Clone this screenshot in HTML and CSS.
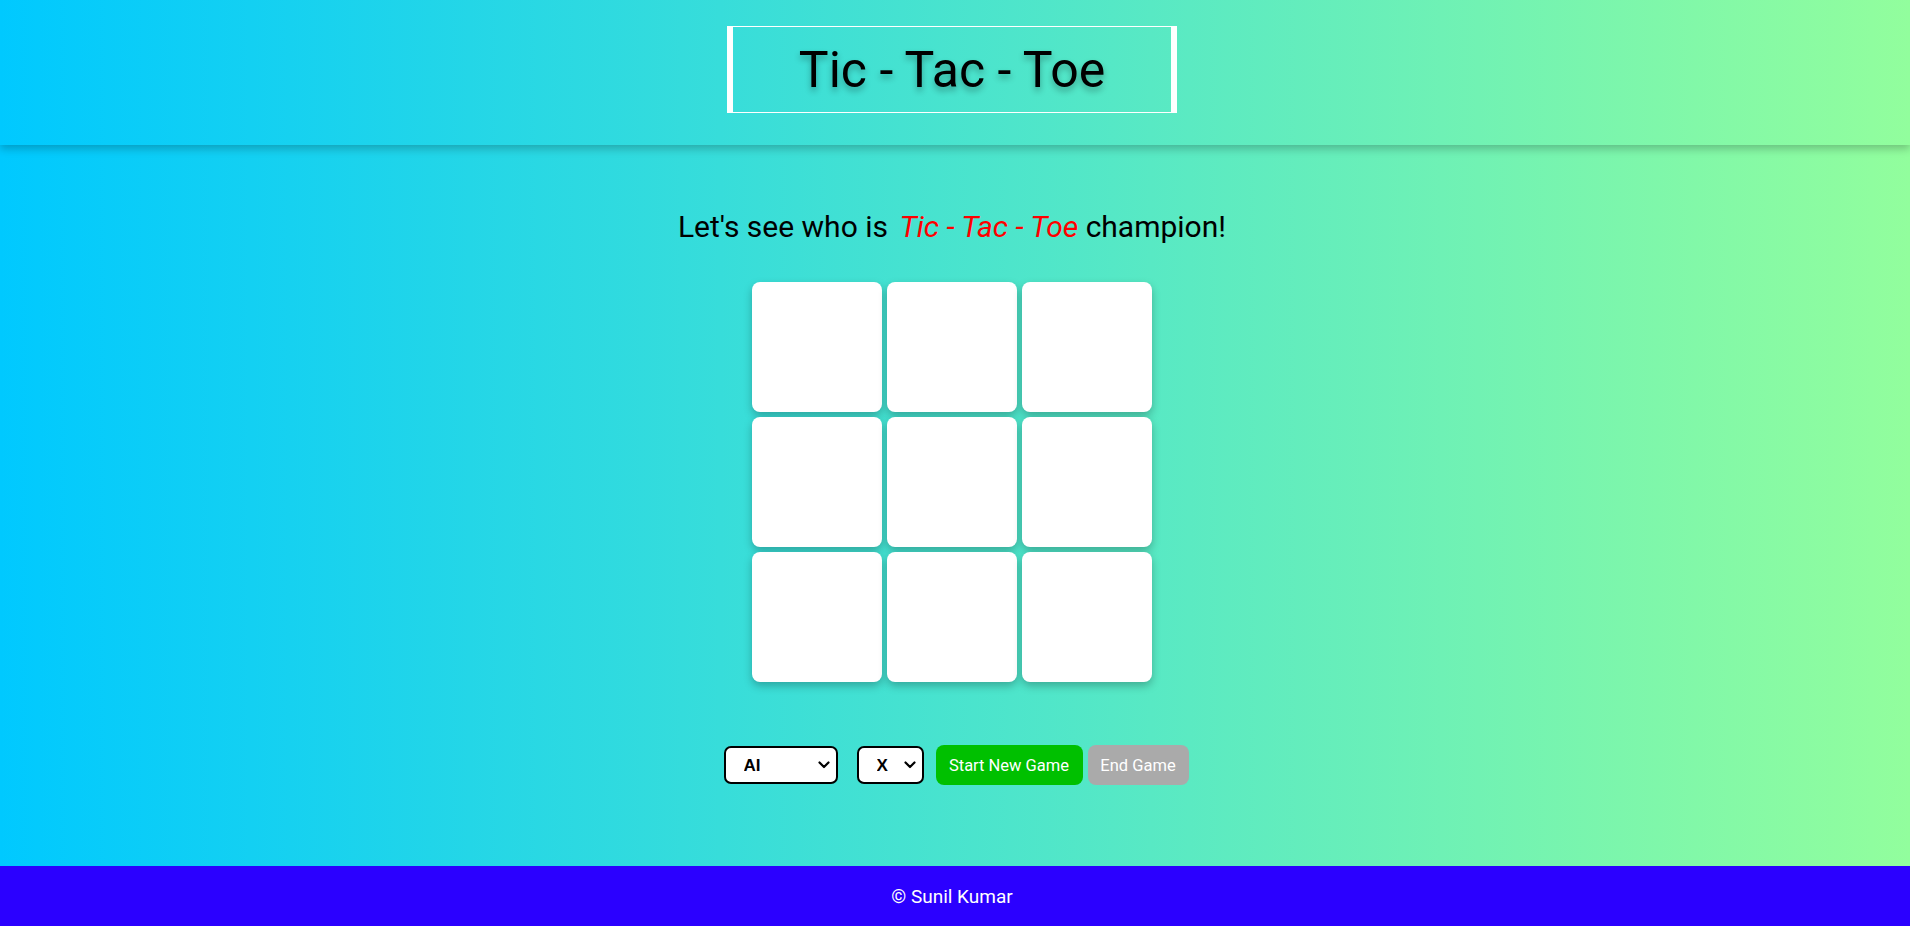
FILE: index.html
```html
<!DOCTYPE html>
<html lang="en">
<head>
<meta charset="utf-8">
<title>Tic - Tac - Toe</title>
<link rel="stylesheet" href="styles.css">
</head>
<body>
<header class="site-header">
  <h1 class="title-box">Tic - Tac - Toe</h1>
</header>
<main class="content">
  <h2 class="subtitle">Let's see who is <em class="accent">Tic - Tac - Toe</em> champion!</h2>
  <div class="board">
    <div class="cell"></div><div class="cell"></div><div class="cell"></div>
    <div class="cell"></div><div class="cell"></div><div class="cell"></div>
    <div class="cell"></div><div class="cell"></div><div class="cell"></div>
  </div>
  <div class="controls">
    <select class="sel sel-mode"><option>AI</option><option>Human</option></select>
    <select class="sel sel-mark"><option>X</option><option>O</option></select>
    <button class="btn btn-start">Start New Game</button>
    <button class="btn btn-end">End Game</button>
  </div>
</main>
<footer class="site-footer">© Sunil Kumar</footer>
</body>
</html>
```
FILE: styles.css
```css
* { box-sizing: border-box; }
html, body { margin: 0; padding: 0; }
body {
  font-family: Roboto, "Liberation Sans", sans-serif;
  background: linear-gradient(to right, #00c9ff, #92fe9d);
  min-height: 100vh;
  display: flex;
  flex-direction: column;
}
.site-header {
  height: 145px;
  background: linear-gradient(to right, #00c9ff, #92fe9d);
  box-shadow: 0 4px 8px rgba(0, 0, 0, 0.22);
  position: relative;
  z-index: 1;
  display: flex;
  justify-content: center;
  padding: 26px 6px 0 0;
}
.title-box {
  margin: 0;
  width: 450px;
  height: 87px;
  border-left: 6px solid #fff;
  border-right: 6px solid #fff;
  border-top: 1px solid #fff;
  border-bottom: 1px solid #fff;
  display: flex;
  align-items: center;
  justify-content: center;
  font-size: 50px;
  font-weight: 400;
  color: #000;
  text-shadow: 0 4px 6px rgba(0, 0, 0, 0.3);
}
.content {
  flex: 1;
  display: flex;
  flex-direction: column;
  align-items: center;
  padding-right: 6px;
}
.subtitle {
  margin: 64px 0 0;
  font-size: 30px;
  font-weight: 400;
  line-height: 1.2;
  color: #000;
}
.accent { color: #ff0000; margin-left: 4px; }
.board {
  margin-top: 37px;
  display: grid;
  grid-template-columns: repeat(3, 130px);
  grid-template-rows: repeat(3, 130px);
  gap: 5px;
}
.cell {
  background: #fff;
  border-radius: 8px;
  box-shadow: 0 4px 8px rgba(0, 0, 0, 0.25);
}
.controls {
  margin: 63px 0 0 8px;
  display: flex;
  align-items: center;
}
.sel {
  -webkit-appearance: none;
  appearance: none;
  height: 38px;
  border: 2px solid #000;
  border-radius: 7px;
  background-color: #fff;
  background-image: url("data:image/svg+xml;utf8,<svg xmlns='http://www.w3.org/2000/svg' width='12' height='8' viewBox='0 0 12 8'><path d='M1.5 1.5 L6 6 L10.5 1.5' fill='none' stroke='black' stroke-width='2.2' stroke-linecap='round' stroke-linejoin='round'/></svg>");
  background-repeat: no-repeat;
  background-position: right 6px center;
  font-family: "Liberation Sans", Arial, sans-serif;
  font-weight: 700;
  font-size: 17px;
  color: #000;
  padding: 0 0 0 18px;
}
.sel-mode { width: 114px; }
.sel-mark { width: 67px; margin-left: 19px; }
.btn {
  height: 40px;
  border: none;
  border-radius: 8px;
  font-family: Roboto, "Liberation Sans", sans-serif;
  font-size: 16.5px;
  color: #fff;
  padding: 0;
}
.btn-start { background: #00c000; margin-left: 12px; width: 147px; }
.btn-end { background: #aaaaaa; margin-left: 5px; width: 101px; }
.site-footer {
  height: 60px;
  background: #2b00ff;
  color: #fff;
  font-size: 19px;
  display: flex;
  align-items: center;
  justify-content: center;
  padding-right: 6px;
}
```
